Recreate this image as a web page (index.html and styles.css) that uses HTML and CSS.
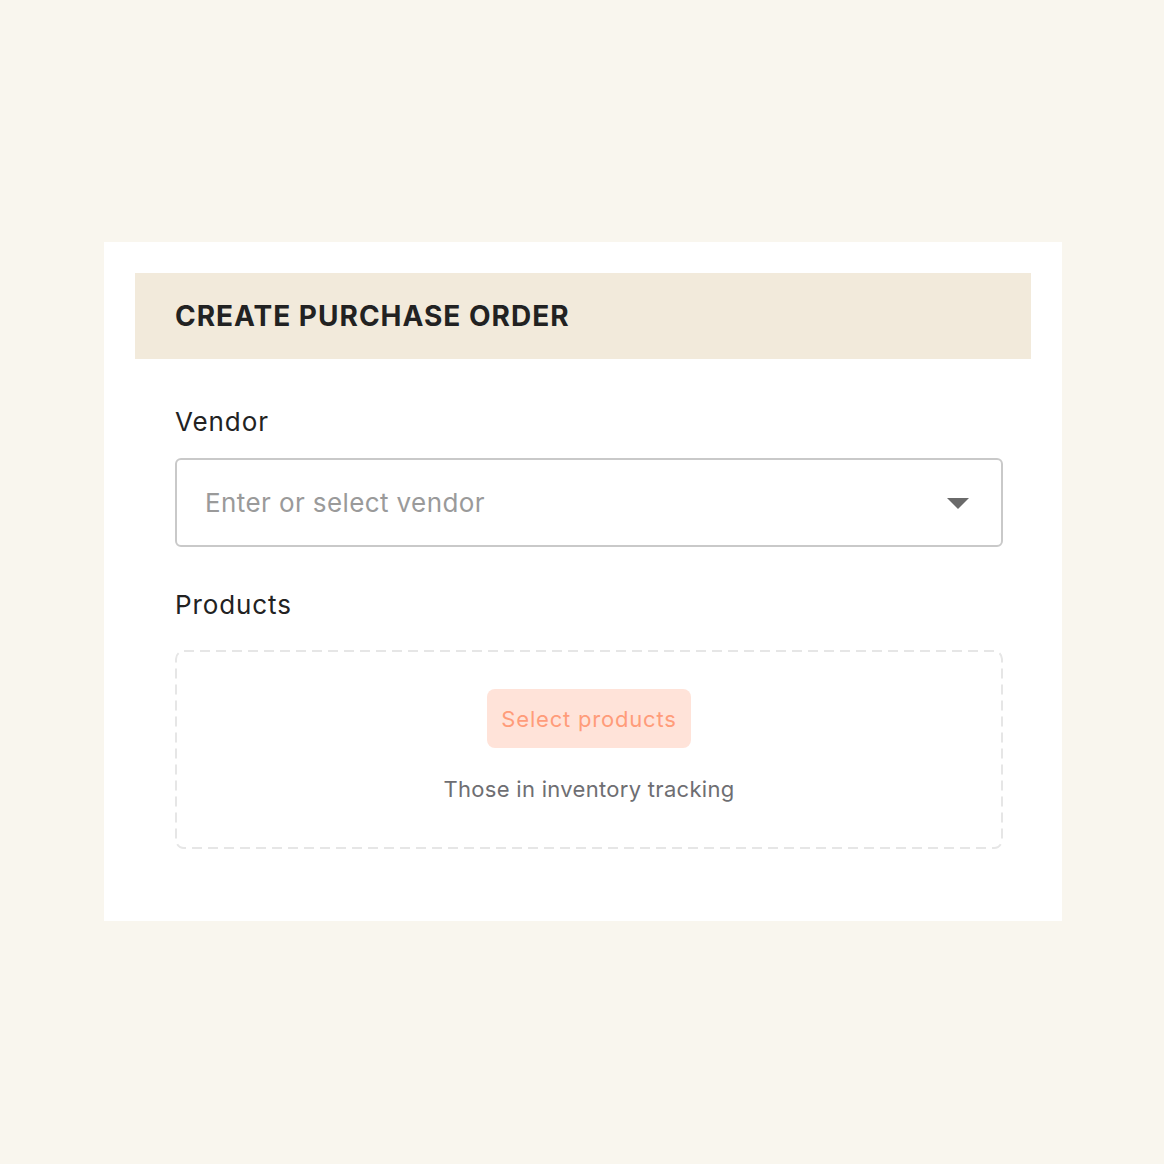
FILE: index.html
```html
<!DOCTYPE html>
<html>
<head>
<meta charset="utf-8">
<link rel="stylesheet" href="styles.css">
</head>
<body>
<div class="page">
  <div class="card">
    <div class="band"><h1 class="title">CREATE PURCHASE ORDER</h1></div>
    <div class="content">
      <div class="label">Vendor</div>
      <div class="select">
        <span class="placeholder">Enter or select vendor</span>
        <svg class="caret" width="22" height="12" viewBox="0 0 22 12"><path d="M0 0 H22 L11 11 Z" fill="#6a6a6a"/></svg>
      </div>
      <div class="label products-label">Products</div>
      <div class="dropzone">
        <button class="btn">Select products</button>
        <div class="hint">Those in inventory tracking</div>
      </div>
    </div>
  </div>
</div>
</body>
</html>
```

FILE: styles.css
```css
html, body {
  margin: 0;
  padding: 0;
  background: #f9f6ee;
  font-family: Inter, "Noto Sans", sans-serif;
}
.page {
  width: 1164px;
  height: 1164px;
  padding-top: 242px;
  box-sizing: border-box;
}
.card {
  margin-left: 104px;
  width: 958px;
  height: 679px;
  background: #fff;
  padding: 31px;
  box-sizing: border-box;
}
.band {
  background: #f2eadb;
  height: 86px;
  display: flex;
  align-items: center;
  padding-left: 40px;
}
.title {
  margin: 0;
  font-size: 28px;
  font-weight: 700;
  color: #222;
  letter-spacing: 1px;
}
.content {
  padding-left: 40px;
  width: 868px;
  box-sizing: border-box;
}
.label {
  font-size: 26px;
  color: #222;
  margin-top: 46px;
  line-height: 34px;
  letter-spacing: 0.9px;
}
.select {
  margin-top: 19px;
  height: 89px;
  border: 2px solid #c9c9c9;
  border-radius: 6px;
  box-sizing: border-box;
  display: flex;
  align-items: center;
  justify-content: space-between;
  padding: 0 32px 0 28px;
}
.placeholder {
  font-size: 26px;
  color: #9a9a9a;
  letter-spacing: 0.4px;
}
.caret { display: block; margin-top: 2px; }
.products-label { margin-top: 41px; }
.dropzone {
  margin-top: 28px;
  height: 199px;
  background-image: url("data:image/svg+xml,%3Csvg xmlns='http://www.w3.org/2000/svg' width='828' height='199'%3E%3Crect x='1' y='1' width='826' height='197' rx='8' ry='8' fill='none' stroke='%23e6e6e6' stroke-width='2' stroke-dasharray='10 6'/%3E%3C/svg%3E");
  background-repeat: no-repeat;
  box-sizing: border-box;
  display: flex;
  flex-direction: column;
  align-items: center;
  padding-top: 39px;
}
.btn {
  font-family: inherit;
  border: none;
  background: #ffe3d9;
  color: #ff9c7a;
  font-size: 22px;
  letter-spacing: 0.8px;
  height: 59px;
  width: 204px;
  border-radius: 8px;
  padding: 0;
}
.hint {
  margin-top: 28px;
  font-size: 22px;
  color: #6e6e72;
  letter-spacing: 0.3px;
}
```
